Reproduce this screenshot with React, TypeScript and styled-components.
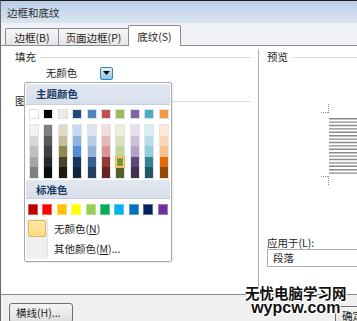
import styled, { createGlobalStyle } from "styled-components";

const GlobalStyle = createGlobalStyle`
  html, body { margin: 0; padding: 0; background: #ffffff; }
  body {
    font-family: "Noto Sans CJK SC", "Liberation Sans", sans-serif;
    font-size: 10.5px;
    color: #1e1e1e;
  }
`;

const THEME_TOP = [
  "#ffffff", "#000000", "#eeece1", "#1f497d", "#4f81bd",
  "#c0504d", "#9bbb59", "#8064a2", "#4bacc6", "#f79646",
];

const THEME_SHADES = [
  ["#f2f2f2", "#d8d8d8", "#bfbfbf", "#a5a5a5", "#7f7f7f"],
  ["#7f7f7f", "#595959", "#3f3f3f", "#262626", "#0c0c0c"],
  ["#ddd9c3", "#c4bd97", "#938953", "#494429", "#1d1b10"],
  ["#c6d9f0", "#8db3e2", "#548dd4", "#17365d", "#0f243e"],
  ["#dbe5f1", "#b8cce4", "#95b3d7", "#366092", "#244061"],
  ["#f2dcdb", "#e5b9b7", "#d99694", "#953734", "#632423"],
  ["#ebf1dd", "#d7e3bc", "#c3d69b", "#76923c", "#4f6128"],
  ["#e5e0ec", "#ccc1d9", "#b2a2c7", "#5f497a", "#3f3151"],
  ["#dbeef3", "#b7dde8", "#92cddc", "#31859b", "#205867"],
  ["#fdeada", "#fbd5b5", "#fac08f", "#e36c09", "#974806"],
];

const STANDARD = [
  "#c00000", "#ff0000", "#ffc000", "#ffff00", "#92d050",
  "#00b050", "#00b0f0", "#0070c0", "#002060", "#7030a0",
];

export default function App() {
  return (
    <>
      <GlobalStyle />
      <Window>
        <TitleBar>边框和底纹</TitleBar>
        <TabStrip>
          <Tab $width={54}>边框(B)</Tab>
          <Tab $width={71}>页面边框(P)</Tab>
          <Tab $width={53} $active>底纹(S)</Tab>
        </TabStrip>
        <Panel>
          <LeftPane>
            <GroupHeader>
              <span>填充</span>
              <GroupLine />
            </GroupHeader>
            <Combo>
              <ComboText>无颜色</ComboText>
              <ComboButton>
                <svg width="7" height="4" viewBox="0 0 7 4">
                  <path d="M0 0h7L3.5 4z" fill="#000" />
                </svg>
              </ComboButton>
            </Combo>
            <GroupHeader $top={15}>
              <span>图案</span>
              <GroupLine />
            </GroupHeader>

            <Popup>
              <SectionHeader>主题颜色</SectionHeader>
              <Palette>
                <SwatchRow>
                  {THEME_TOP.map((c) => (
                    <Swatch key={c} $color={c} />
                  ))}
                </SwatchRow>
                <ShadeRow>
                  {THEME_SHADES.map((col, i) => (
                    <ShadeColumn key={i}>
                      {col.map((c, j) => (
                        <ShadeCell key={c} $color={c} $selected={i === 6 && j === 3} />
                      ))}
                    </ShadeColumn>
                  ))}
                </ShadeRow>
              </Palette>
              <SectionHeader $small>标准色</SectionHeader>
              <StandardRow>
                {STANDARD.map((c) => (
                  <Swatch key={c} $color={c} $plain />
                ))}
              </StandardRow>
              <MenuItem>
                <MenuIcon>
                  <NoColorBox />
                </MenuIcon>
                <MenuLabel>
                  无颜色(<u>N</u>)
                </MenuLabel>
              </MenuItem>
              <MenuItem>
                <MenuIcon />
                <MenuLabel>
                  其他颜色(<u>M</u>)...
                </MenuLabel>
              </MenuItem>
            </Popup>
          </LeftPane>

          <RightPane>
            <GroupHeader $right>
              <span>预览</span>
              <GroupLine />
            </GroupHeader>
            <Preview width="98" height="174" viewBox="0 0 98 174">
              <g stroke="#8e8e8e" strokeWidth="1" strokeDasharray="1 1">
                <path d="M69.5 41v9M62 49.5h8" />
                <path d="M62 113.5h8M69.5 113v9" />
              </g>
              <g stroke="#8a8a8a" strokeWidth="1.4">
                {Array.from({ length: 17 }).map((_, i) => (
                  <line key={i} x1="70" x2="110" y1={55.7 + i * 3.4} y2={55.7 + i * 3.4} />
                ))}
              </g>
            </Preview>
            <FieldLabel>应用于(L):</FieldLabel>
            <Field>段落</Field>
          </RightPane>
        </Panel>
        <Footer>
          <Button $width={64}>横线(H)...</Button>
          <Button $width={40} $top={3}>确定</Button>
        </Footer>
        <Watermark>
          <WatermarkCn>无忧电脑学习网</WatermarkCn>
          <WatermarkEn>wypcw.com</WatermarkEn>
        </Watermark>
      </Window>
    </>
  );
}

const Window = styled.div`
  position: relative;
  width: 357px;
  height: 321px;
  overflow: hidden;
  display: flex;
  flex-direction: column;
  box-sizing: border-box;
  border-top: 1px solid #1c1c1c;
  border-left: 1px solid #6b6b6b;
  background: #f0f0f0;
`;

const TitleBar = styled.div`
  height: 22px;
  line-height: 23px;
  padding-left: 6px;
  flex-shrink: 0;
  color: #2a2a2a;
  background: linear-gradient(#b9cde6, #c9d8ec 45%, #d9e4f1);
`;

const TabStrip = styled.div`
  height: 23px;
  flex-shrink: 0;
  display: flex;
  align-items: flex-end;
  padding-left: 4px;
  box-sizing: border-box;
  border-bottom: 1px solid #898c95;
  background: #eff1f4;
`;

const Tab = styled.div<{ $width: number; $active?: boolean }>`
  width: ${(p) => p.$width}px;
  height: ${(p) => (p.$active ? 21 : 17)}px;
  margin-bottom: ${(p) => (p.$active ? -1 : 0)}px;
  margin-left: ${(p) => (p.$active ? -1 : 0)}px;
  box-sizing: border-box;
  border: 1px solid #898c95;
  border-bottom: none;
  border-left: ${(p) => (p.$active ? "1px solid #898c95" : "1px solid #898c95")};
  border-radius: 2px 2px 0 0;
  display: flex;
  align-items: center;
  justify-content: center;
  padding-top: ${(p) => (p.$active ? 0 : 1)}px;
  background: ${(p) => (p.$active ? "#ffffff" : "linear-gradient(#f6f6f6, #e6e6e6)")};
  position: relative;
  & + & { margin-left: -1px; }
`;

const Panel = styled.div`
  height: 248px;
  flex-shrink: 0;
  display: flex;
  background: #ffffff;
  border-bottom: 1px solid #898c95;
`;

const LeftPane = styled.div`
  position: relative;
  width: 257px;
  box-sizing: border-box;
  padding: 5px 7px 0 14px;
`;

const RightPane = styled.div`
  flex: 1;
  margin: 3px 0 6px;
  border-left: 1px solid #b0b0b0;
  padding: 2px 0 0 8px;
  display: flex;
  flex-direction: column;
`;

const GroupHeader = styled.div<{ $top?: number; $right?: boolean }>`
  display: flex;
  align-items: center;
  gap: 4px;
  height: 12px;
  line-height: 12px;
  margin-top: ${(p) => p.$top ?? 0}px;
  margin-right: ${(p) => (p.$right ? -20 : 0)}px;
`;

const GroupLine = styled.div`
  flex: 1;
  height: 1px;
  background: #d5dfe5;
`;

const Combo = styled.div`
  margin: 3px 0 0 8px;
  width: 90px;
  height: 14px;
  display: flex;
  align-items: center;
`;

const ComboText = styled.div`
  flex: 1;
  text-align: center;
  line-height: 14px;
`;

const ComboButton = styled.div`
  width: 13px;
  height: 13px;
  box-sizing: border-box;
  border: 1px solid #3c7fb1;
  border-radius: 2px;
  background: linear-gradient(#e5f4fc, #b3dbf3 50%, #8ec5ea);
  display: flex;
  align-items: center;
  justify-content: center;
`;

const Popup = styled.div`
  position: absolute;
  left: 23px;
  top: 36px;
  width: 148px;
  height: 180px;
  box-sizing: border-box;
  border: 1px solid #a7abb0;
  border-radius: 2px;
  background: #ffffff;
  padding: 1px 1px 0;
  display: flex;
  flex-direction: column;
  box-shadow: 1px 1px 1px rgba(0, 0, 0, 0.08);
`;

const SectionHeader = styled.div<{ $small?: boolean }>`
  height: ${(p) => (p.$small ? 18 : 20)}px;
  line-height: ${(p) => (p.$small ? 20 : 20)}px;
  padding-left: 10px;
  font-weight: 700;
  color: #1d3a62;
  background: linear-gradient(#e2e8f0, #d7dfea);
  border-bottom: 1px solid #c7d0dc;
  flex-shrink: 0;
`;

const Palette = styled.div`
  padding: 4px 0 1px 3px;
  display: flex;
  flex-direction: column;
  gap: 5px;
`;

const SwatchRow = styled.div`
  display: flex;
  gap: 4.4px;
`;

const Swatch = styled.div<{ $color: string; $plain?: boolean }>`
  width: 10px;
  height: ${(p) => (p.$plain ? 11 : 10)}px;
  box-sizing: border-box;
  background: ${(p) => p.$color};
  border: 1px solid ${(p) => (p.$plain ? "rgba(255,255,255,0.35)" : "#dcdfe3")};
`;

const ShadeRow = styled.div`
  display: flex;
  gap: 4.4px;
`;

const ShadeColumn = styled.div`
  width: 10px;
  box-sizing: border-box;
  border: 1px solid #e2e4e7;
  display: flex;
  flex-direction: column;
`;

const ShadeCell = styled.div<{ $color: string; $selected?: boolean }>`
  height: 10.6px;
  box-sizing: border-box;
  background: ${(p) => p.$color};
  outline: ${(p) => (p.$selected ? "1px solid #f2b541" : "none")};
  outline-offset: ${(p) => (p.$selected ? "0" : "0")};
  border: ${(p) => (p.$selected ? "1px solid #f9d78b" : "none")};
  position: relative;
  z-index: ${(p) => (p.$selected ? 1 : 0)};
`;

const StandardRow = styled.div`
  display: flex;
  gap: 4.4px;
  padding: 5px 0 4px 2px;
`;

const MenuItem = styled.div`
  display: flex;
  height: 20px;
  flex-shrink: 0;
`;

const MenuIcon = styled.div`
  width: 22px;
  box-sizing: border-box;
  background: #eef0f2;
  border-right: 1px solid #e1e3e6;
  display: flex;
  align-items: center;
  justify-content: center;
`;

const NoColorBox = styled.div`
  width: 18px;
  height: 17px;
  box-sizing: border-box;
  border: 1px solid #e2b45a;
  border-radius: 2px;
  background: linear-gradient(#fee7a8, #fdd986);
`;

const MenuLabel = styled.div`
  padding-left: 6px;
  line-height: 20px;
  color: #1e1e1e;
  & u { text-underline-offset: 1px; }
`;

const Preview = styled.svg`
  display: block;
  margin: 0 0 0 -8px;
`;

const FieldLabel = styled.div`
  line-height: 12px;
  height: 12px;
`;

const Field = styled.div`
  margin-top: 0;
  height: 18px;
  box-sizing: border-box;
  margin-right: -10px;
  border: 1px solid #abadb3;
  padding-left: 5px;
  line-height: 16px;
`;

const Footer = styled.div`
  flex: 1;
  display: flex;
  justify-content: space-between;
  align-items: flex-start;
  padding: 8px 0 0 8px;
`;

const Button = styled.div<{ $width: number; $top?: number }>`
  width: ${(p) => p.$width}px;
  height: 20px;
  margin-top: ${(p) => p.$top ?? 0}px;
  margin-right: -18px;
  box-sizing: border-box;
  border: 1px solid #707070;
  border-radius: 3px;
  background: linear-gradient(#f3f3f3, #ebebeb 50%, #dddddd);
  line-height: 18px;
  padding-left: 6px;
  &:first-child { margin-right: 0; }
`;

const Watermark = styled.div`
  position: absolute;
  left: 244px;
  top: 283px;
  display: flex;
  flex-direction: column;
  align-items: center;
  color: #111;
  text-shadow: -1px 0 #fff, 1px 0 #fff, 0 -1px #fff, 0 1px #fff, 1px 1px #fff, -1px -1px #fff;
`;

const WatermarkCn = styled.div`
  font-size: 14.5px;
  font-weight: 700;
  line-height: 17px;
`;

const WatermarkEn = styled.div`
  font-family: "Liberation Sans", Arial, sans-serif;
  font-size: 16px;
  font-weight: 700;
  line-height: 13px;
`;
